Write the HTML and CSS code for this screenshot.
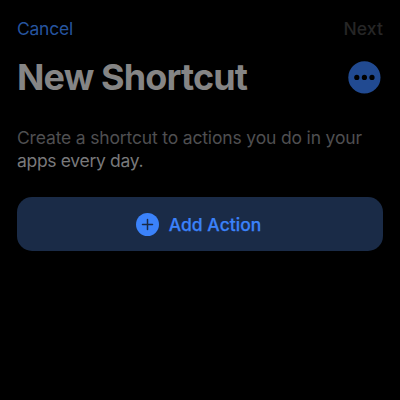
FILE: index.html
```html
<!DOCTYPE html>
<html lang="en">
<head>
<meta charset="utf-8">
<title>New Shortcut</title>
<link rel="stylesheet" href="styles.css">
</head>
<body>
<nav class="nav"><span class="cancel">Cancel</span><span class="next">Next</span></nav>
<header class="header">
<h1 class="title">New Shortcut</h1>
<svg class="more" viewBox="0 0 33 33"><circle class="more-bg" cx="16.4" cy="16.4" r="16.1"/><circle cx="8.8" cy="16.4" r="2.6"/><circle cx="16.4" cy="16.4" r="2.6"/><circle cx="24" cy="16.4" r="2.6"/></svg>
</header>
<p class="intro"><span class="line-one">Create a shortcut to actions you do in your</span><br><span class="line-two">apps every day.</span></p>
<div class="add">
<svg class="plus" viewBox="0 0 23 23"><circle cx="11.5" cy="11.5" r="11.5"/><path d="M11.5 6.5v10M6.5 11.5h10"/></svg>
<span class="add-label">Add Action</span>
</div>
</body>
</html>
```

FILE: styles.css
```css
* { box-sizing: border-box; }
body {
  margin: 0;
  height: 400px;
  padding: 17px 17px 0;
  background: #000;
  font-family: Inter, sans-serif;
  overflow: hidden;
}
.nav {
  display: flex;
  justify-content: space-between;
  font-size: 17.5px;
  line-height: 23px;
}
.cancel { color: #26549f; letter-spacing: -.25px; }
.next { color: #262626; font-weight: 500; letter-spacing: .1px; }
.header {
  display: flex;
  justify-content: space-between;
  align-items: center;
  height: 44px;
  margin-top: 15px;
  padding-right: 2px;
}
.title {
  margin: 0;
  color: #858585;
  font-size: 36px;
  font-weight: 700;
  line-height: 44px;
  letter-spacing: -.87px;
  white-space: nowrap;
}
.more { width: 33px; height: 33px; }
.more-bg { fill: #214a91; }
.intro {
  margin: 27px 0 0;
  font-size: 17.5px;
  line-height: 23px;
  white-space: nowrap;
}
.line-one { color: #4f4f51; letter-spacing: -.16px; }
.line-two { color: #79797b; letter-spacing: -.32px; }
.add {
  display: flex;
  align-items: center;
  justify-content: center;
  gap: 10px;
  height: 53.5px;
  margin-top: 25.3px;
  padding: 1px 3px 0 0;
  border-radius: 15px;
  background: #1a2b47;
}
.plus { width: 23px; height: 23px; fill: #3b82fa; }
.plus path { stroke: #192a47; stroke-width: 1.5; stroke-linecap: round; }
.add-label {
  color: #3b82fa;
  font-size: 17.5px;
  font-weight: 500;
  letter-spacing: .03px;
  -webkit-text-stroke: .25px #3b82fa;
}
```
